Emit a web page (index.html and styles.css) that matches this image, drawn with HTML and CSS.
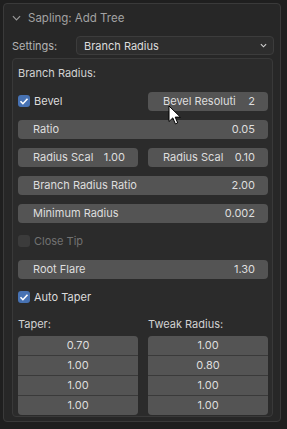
FILE: index.html
```html
<!DOCTYPE html>
<html lang="en">
<head>
  <meta charset="UTF-8">
  <title>Sapling: Add Tree</title>
  <link rel="stylesheet" href="styles.css">
</head>
<body>
  <div class="panel">
    <div class="panel-header">
      <svg class="chevron" viewBox="0 0 10 6"><path d="M1 1l4 4 4-4"/></svg>
      <span>Sapling: Add Tree</span>
    </div>
    <div class="settings-row">
      <span class="settings-label">Settings:</span>
      <div class="dropdown">
        <span>Branch Radius</span>
        <svg class="drop-arrow" viewBox="0 0 8 5"><path d="M1 1l3 3 3-3"/></svg>
      </div>
    </div>
    <div class="box">
      <div class="row label">Branch Radius:</div>
      <div class="row split">
        <label class="check"><span class="tick on"><svg viewBox="0 0 12 12"><path d="M2.5 6.3l2.4 2.4 4.6-5"/></svg></span>Bevel</label>
        <div class="field"><span>Bevel Resoluti</span><span>2</span></div>
      </div>
      <div class="row"><div class="field"><span>Ratio</span><span>0.05</span></div></div>
      <div class="row split">
        <div class="field"><span>Radius Scal</span><span>1.00</span></div>
        <div class="field"><span>Radius Scal</span><span>0.10</span></div>
      </div>
      <div class="row"><div class="field"><span>Branch Radius Ratio</span><span>2.00</span></div></div>
      <div class="row"><div class="field"><span>Minimum Radius</span><span>0.002</span></div></div>
      <div class="row"><label class="check disabled"><span class="tick"></span>Close Tip</label></div>
      <div class="row"><div class="field"><span>Root Flare</span><span>1.30</span></div></div>
      <div class="row"><label class="check"><span class="tick on"><svg viewBox="0 0 12 12"><path d="M2.5 6.3l2.4 2.4 4.6-5"/></svg></span>Auto Taper</label></div>
      <div class="columns">
        <div class="col">
          <div class="col-title">Taper:</div>
          <div class="stack">
            <div class="cell">0.70</div>
            <div class="cell">1.00</div>
            <div class="cell">1.00</div>
            <div class="cell">1.00</div>
          </div>
        </div>
        <div class="col">
          <div class="col-title">Tweak Radius:</div>
          <div class="stack">
            <div class="cell">1.00</div>
            <div class="cell">0.80</div>
            <div class="cell">1.00</div>
            <div class="cell">1.00</div>
          </div>
        </div>
      </div>
    </div>
  </div>
  <!-- pointeur souris au-dessus du bouton -->
  <svg class="cursor" viewBox="0 0 13 20"><path d="M1 1v15.5l3.8-3.6 2.6 6 2.3-1-2.5-5.8h5.2z"/></svg>
</body>
</html>
```

FILE: styles.css
```css
* { box-sizing: border-box; }
body {
  margin: 0;
  width: 287px;
  height: 429px;
  background: #1f1f1f;
  font-family: Inter, 'Noto Sans', sans-serif;
  font-size: 11px;
  color: #dedede;
  position: relative;
  overflow: hidden;
}
.panel {
  margin: 3px 0 0 3px;
  width: 278px;
  height: 419px;
  background: #272727;
  border: 1px solid #3a3a3a;
  border-radius: 4px;
  display: flex;
  flex-direction: column;
}
.panel-header {
  height: 27px;
  display: flex;
  align-items: center;
  gap: 7px;
  padding-left: 8px;
  color: #a2a2a2;
  font-size: 11.5px;
}
.chevron { width: 9px; height: 6px; fill: none; stroke: #9a9a9a; stroke-width: 1.3; }
.settings-row {
  display: flex;
  align-items: center;
  height: 19px;
  margin-top: 5px;
  padding-left: 8px;
}
.settings-label { width: 64px; color: #b4b4b4; }
.dropdown {
  flex: 1;
  height: 19px;
  margin-right: 6px;
  background: #2d2d2d;
  border: 1px solid #3c3c3c;
  border-radius: 4px;
  display: flex;
  align-items: center;
  justify-content: space-between;
  padding: 0 6px 0 7px;
  color: #dcdcdc;
}
.drop-arrow { width: 7px; height: 5px; fill: none; stroke: #d0d0d0; stroke-width: 1.3; }
.box {
  margin: 3px 7px 0 8px;
  height: 359px;
  background: #2b2b2b;
  border: 1px solid #393939;
  border-radius: 4px;
  padding: 0 4px 0 5px;
  display: flex;
  flex-direction: column;
}
.row {
  height: 28px;
  flex: none;
  display: flex;
  align-items: center;
}
.row.label { color: #d2d2d2; }
.row.split {
  display: grid;
  grid-template-columns: repeat(2, minmax(0, 1fr));
  column-gap: 10px;
}
.field {
  flex: 1;
  height: 19px;
  background: #545454;
  border-radius: 4px;
  display: flex;
  align-items: center;
  justify-content: space-between;
  padding: 0 13px 0 15px;
  white-space: nowrap;
  overflow: hidden;
}
.check { display: flex; align-items: center; gap: 4px; color: #dcdcdc; }
.tick {
  width: 12px;
  height: 12px;
  border-radius: 3px;
  background: #545454;
  display: flex;
}
.tick.on { background: #4772b3; }
.tick svg { width: 12px; height: 12px; fill: none; stroke: #ffffff; stroke-width: 1.6; }
.check.disabled { color: #727272; }
.check.disabled .tick { background: #3b3b3b; }
.columns {
  display: grid;
  grid-template-columns: repeat(2, minmax(0, 1fr));
  column-gap: 10px;
}
.col-title { height: 25px; padding-top: 2px; line-height: 23px; color: #d2d2d2; }
.stack {
  border-radius: 4px;
  overflow: hidden;
  display: flex;
  flex-direction: column;
  gap: 1px;
  background: #3a3a3a;
}
.cell {
  height: 19px;
  line-height: 19px;
  background: #545454;
  text-align: center;
}
.cursor {
  position: absolute;
  left: 168px;
  top: 105px;
  width: 13px;
  height: 20px;
  fill: #ffffff;
  stroke: #000000;
  stroke-width: 1;
}
```
